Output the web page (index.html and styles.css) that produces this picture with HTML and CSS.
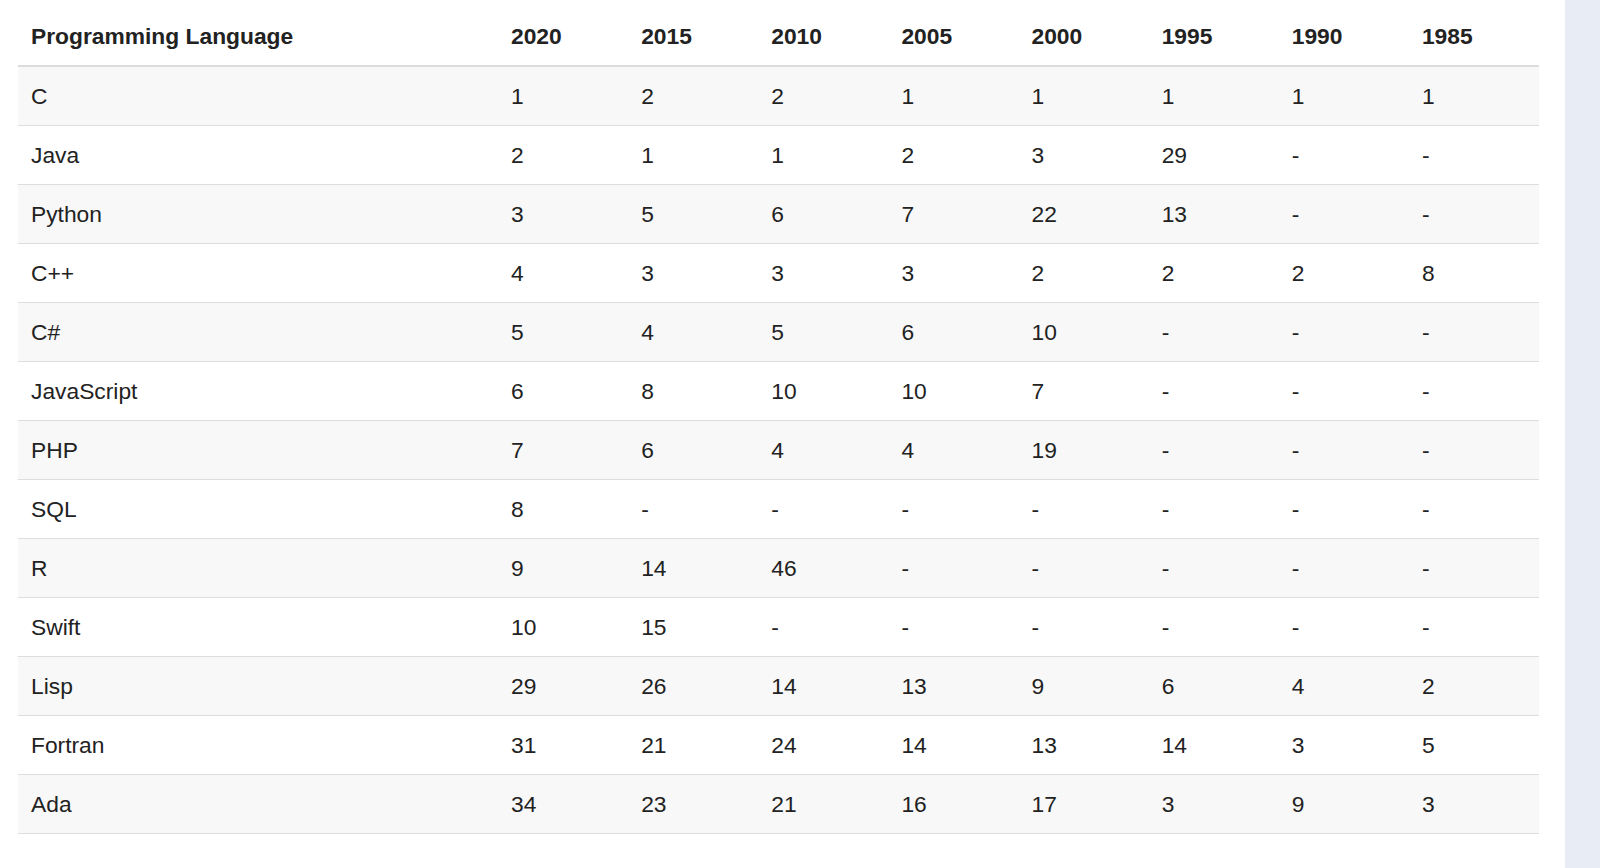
FILE: index.html
```html
<!DOCTYPE html>
<html>
<head>
<meta charset="utf-8">
<link rel="stylesheet" href="styles.css">
</head>
<body>
<div class="page">
  <main class="content">
    <table class="rank-table">
      <thead>
        <tr><th class="lang">Programming Language</th><th>2020</th><th>2015</th><th>2010</th><th>2005</th><th>2000</th><th>1995</th><th>1990</th><th>1985</th></tr>
      </thead>
      <tbody>
        <tr><td>C</td><td>1</td><td>2</td><td>2</td><td>1</td><td>1</td><td>1</td><td>1</td><td>1</td></tr>
        <tr><td>Java</td><td>2</td><td>1</td><td>1</td><td>2</td><td>3</td><td>29</td><td>-</td><td>-</td></tr>
        <tr><td>Python</td><td>3</td><td>5</td><td>6</td><td>7</td><td>22</td><td>13</td><td>-</td><td>-</td></tr>
        <tr><td>C++</td><td>4</td><td>3</td><td>3</td><td>3</td><td>2</td><td>2</td><td>2</td><td>8</td></tr>
        <tr><td>C#</td><td>5</td><td>4</td><td>5</td><td>6</td><td>10</td><td>-</td><td>-</td><td>-</td></tr>
        <tr><td>JavaScript</td><td>6</td><td>8</td><td>10</td><td>10</td><td>7</td><td>-</td><td>-</td><td>-</td></tr>
        <tr><td>PHP</td><td>7</td><td>6</td><td>4</td><td>4</td><td>19</td><td>-</td><td>-</td><td>-</td></tr>
        <tr><td>SQL</td><td>8</td><td>-</td><td>-</td><td>-</td><td>-</td><td>-</td><td>-</td><td>-</td></tr>
        <tr><td>R</td><td>9</td><td>14</td><td>46</td><td>-</td><td>-</td><td>-</td><td>-</td><td>-</td></tr>
        <tr><td>Swift</td><td>10</td><td>15</td><td>-</td><td>-</td><td>-</td><td>-</td><td>-</td><td>-</td></tr>
        <tr><td>Lisp</td><td>29</td><td>26</td><td>14</td><td>13</td><td>9</td><td>6</td><td>4</td><td>2</td></tr>
        <tr><td>Fortran</td><td>31</td><td>21</td><td>24</td><td>14</td><td>13</td><td>14</td><td>3</td><td>5</td></tr>
        <tr><td>Ada</td><td>34</td><td>23</td><td>21</td><td>16</td><td>17</td><td>3</td><td>9</td><td>3</td></tr>
      </tbody>
    </table>
  </main>
  <aside class="side-panel"></aside>
</div>
</body>
</html>
```

FILE: styles.css
```css
html, body {
  margin: 0;
  padding: 0;
  background: #ffffff;
}

body {
  font-family: "Liberation Sans", Arial, Helvetica, sans-serif;
  color: #222222;
}

.page {
  display: flex;
  width: 1600px;
  height: 868px;
  overflow: hidden;
}

.content {
  flex: 1;
  padding: 8px 26px 0 18px;
}

.side-panel {
  width: 35px;
  background: #e8ecf5;
}

.rank-table {
  width: 1521px;
  border-collapse: collapse;
  table-layout: fixed;
  font-size: 22.8px;
  line-height: 32px;
}

.rank-table th,
.rank-table td {
  text-align: left;
  padding: 13px 13px;
  white-space: nowrap;
}

.rank-table th {
  font-weight: bold;
  padding-top: 12px;
  padding-bottom: 13px;
  border-bottom: 2px solid #dddddd;
  color: #222222;
}

.rank-table th.lang {
  width: 454px;
}

.rank-table td {
  border-bottom: 1px solid #dddddd;
  color: #222222;
}

.rank-table tbody tr:nth-child(odd) {
  background: #f8f8f8;
}
```
